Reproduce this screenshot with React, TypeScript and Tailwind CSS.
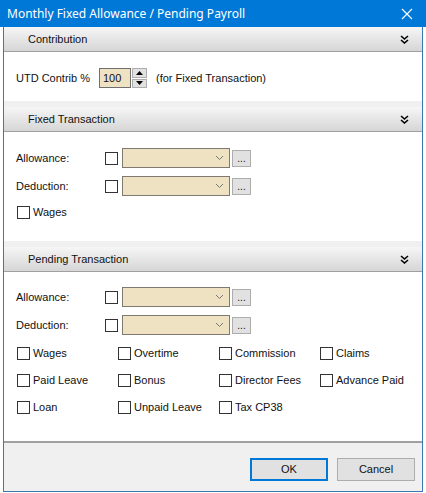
import React from 'react';

const font = { fontFamily: '"Liberation Sans", Arial, sans-serif' };

const Chevrons: React.FC = () => (
    <svg width="9" height="9" viewBox="0 0 9 9" className="shrink-0">
        <path d="M1 1 L4.5 4 L8 1 M1 5 L4.5 8 L8 5" stroke="#000" strokeWidth="1.6" fill="none" />
    </svg>
);

const Header: React.FC<{ title: string }> = ({ title }) => (
    <div className="h-[25px] flex items-center justify-between pl-[24px] pr-[13px] bg-gradient-to-b from-[#f6f6f6] to-[#d6d6d6] border-b border-[#a0a0a0] text-[11px] text-[#111]">
        <span>{title}</span>
        <Chevrons />
    </div>
);

const Box: React.FC = () => <div className="w-[13px] h-[13px] border border-[#333] bg-white shrink-0" />;

const Check: React.FC<{ label: string }> = ({ label }) => (
    <div className="flex items-center gap-[3px] h-[20px] text-[11px] text-[#111]">
        <Box />
        <span>{label}</span>
    </div>
);

const ComboRow: React.FC<{ label: string }> = ({ label }) => (
    <div className="flex items-center h-[20px] text-[11px] text-[#111]">
        <span className="w-[89px]">{label}</span>
        <Box />
        <div className="ml-[4px] w-[108px] h-[20px] border border-[#7e7a70] bg-[#efe2c2] flex items-center justify-end pr-[5px]">
            <svg width="9" height="6" viewBox="0 0 9 6">
                <path d="M1 1 L4.5 4.5 L8 1" stroke="#777" strokeWidth="1" fill="none" />
            </svg>
        </div>
        <div className="ml-[2px] w-[19px] h-[17px] border border-[#adadad] bg-[#e1e1e1] flex items-end justify-center pb-[2px] text-[10px] leading-none">
            ...
        </div>
    </div>
);

const App: React.FC = () => {
    return (
        <div className="w-[426px] h-[493px] bg-white overflow-hidden" style={font}>
            <div className="h-[27px] bg-[#0078d7] flex items-center justify-between pl-[7px] pr-[13px] text-white">
                <span className="text-[12px]" style={{ fontFamily: '"Noto Sans", "Liberation Sans", sans-serif' }}>
                    Monthly Fixed Allowance / Pending Payroll
                </span>
                <svg width="12" height="12" viewBox="0 0 12 12">
                    <path d="M1 1 L11 11 M11 1 L1 11" stroke="#fff" strokeWidth="1.2" />
                </svg>
            </div>

            <div className="ml-[3px] w-[420px] h-[465px] border-x border-b border-[#3b78b0] bg-[#f0f0f0] flex flex-col">
                <div className="bg-white border-b-2 border-[#a0a0a0] flex flex-col">
                    <Header title="Contribution" />
                    <div className="h-[49px] pl-[12px] pt-[16px] flex items-start text-[11px] text-[#111]">
                        <div className="flex items-center h-[20px]">
                            <span className="w-[83px]">UTD Contrib %</span>
                            <div className="w-[32px] h-[20px] border border-[#6f6f6f] bg-[#efe2c2] flex items-center pl-[3px]">100</div>
                            <div className="w-[16px] h-[20px] flex flex-col gap-[1px] pl-[1px]">
                                <div className="flex-1 bg-[#e1e1e1] border border-[#adadad] flex items-center justify-center">
                                    <svg width="7" height="4" viewBox="0 0 7 4"><path d="M0 4 L3.5 0 L7 4 Z" fill="#000" /></svg>
                                </div>
                                <div className="flex-1 bg-[#e1e1e1] border border-[#adadad] flex items-center justify-center">
                                    <svg width="7" height="4" viewBox="0 0 7 4"><path d="M0 0 L3.5 4 L7 0 Z" fill="#000" /></svg>
                                </div>
                            </div>
                            <span className="ml-[9px]">(for Fixed Transaction)</span>
                        </div>
                    </div>
                    <div className="h-[6px] bg-[#f0f0f0]" />
                    <Header title="Fixed Transaction" />
                    <div className="h-[109px] pl-[12px] pt-[16px] flex flex-col gap-[8px]">
                        <ComboRow label="Allowance:" />
                        <ComboRow label="Deduction:" />
                        <div className="pl-[1px] -mt-[2px]">
                            <Check label="Wages" />
                        </div>
                    </div>
                    <div className="h-[6px] bg-[#f0f0f0]" />
                    <Header title="Pending Transaction" />
                    <div className="h-[169px] pl-[12px] pt-[15px] flex flex-col">
                        <div className="flex flex-col gap-[8px]">
                            <ComboRow label="Allowance:" />
                            <ComboRow label="Deduction:" />
                        </div>
                        <div className="mt-[8px] pl-[1px] grid grid-cols-[101px_101px_101px_101px] gap-y-[7px]">
                            <Check label="Wages" />
                            <Check label="Overtime" />
                            <Check label="Commission" />
                            <Check label="Claims" />
                            <Check label="Paid Leave" />
                            <Check label="Bonus" />
                            <Check label="Director Fees" />
                            <Check label="Advance Paid" />
                            <Check label="Loan" />
                            <Check label="Unpaid Leave" />
                            <Check label="Tax CP38" />
                        </div>
                    </div>
                </div>
                <div className="flex justify-end gap-[9px] pr-[7px] pt-[15px] text-[11px] text-[#111]">
                    <button className="w-[78px] h-[23px] bg-[#e1e1e1] border-2 border-[#0078d7]">OK</button>
                    <button className="w-[78px] h-[23px] bg-[#e1e1e1] border border-[#adadad]">Cancel</button>
                </div>
            </div>
        </div>
    );
};

export default App;
